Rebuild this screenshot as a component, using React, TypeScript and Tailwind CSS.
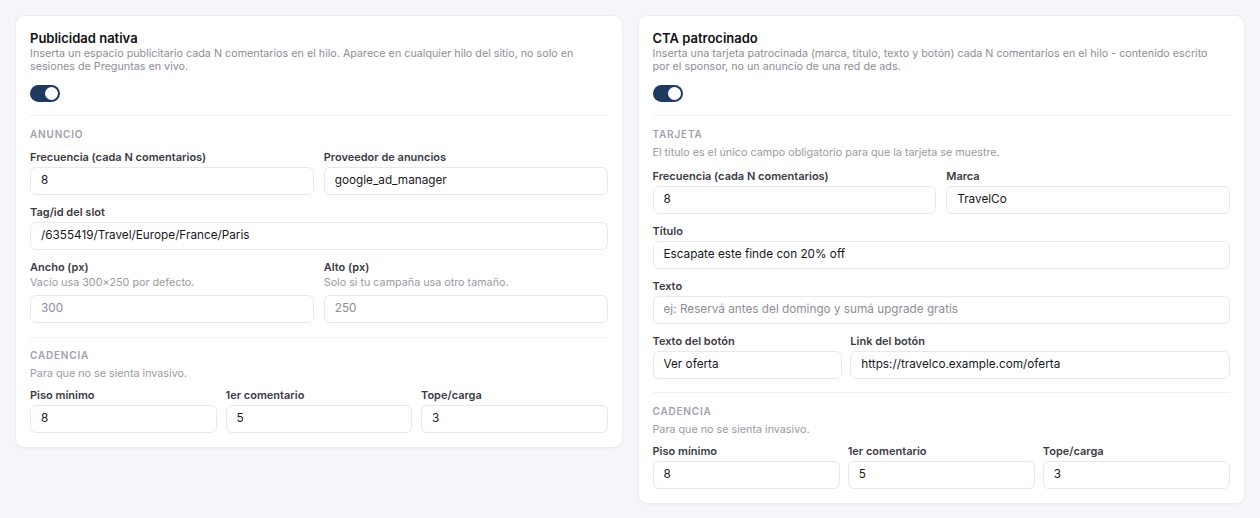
import React from "react";

const font = { fontFamily: "Inter, 'Noto Sans', sans-serif" };

function Toggle() {
  return (
    <div className="mt-3 flex h-[17px] w-[30px] items-center justify-end rounded-full bg-[#1f3a5f] p-[2px]">
      <div className="h-[13px] w-[13px] rounded-full bg-white" />
    </div>
  );
}

function Field({
  label,
  hint,
  value,
  placeholder,
}: {
  label: string;
  hint?: string;
  value?: string;
  placeholder?: string;
}) {
  return (
    <div className="flex min-w-0 flex-col">
      <div className="text-[11px] leading-[14px] font-semibold text-[#3b3b45]">{label}</div>
      {hint && <div className="mt-[2px] text-[10.75px] leading-[13px] text-[#9a9aa3]">{hint}</div>}
      <div
        className={`${hint ? "mt-[6px]" : "mt-[3px]"} flex h-[28px] items-center rounded-[6px] border border-[#e8e8ee] bg-white px-[10px] text-[11.75px] ${
          value ? "text-[#18181b]" : "text-[#8e8e96]"
        }`}
      >
        <span className="truncate">{value ?? placeholder}</span>
      </div>
    </div>
  );
}

function SectionHead({ title, hint }: { title: string; hint?: string }) {
  return (
    <>
      <div className="text-[10px] leading-[13px] font-semibold tracking-[0.08em] text-[#a1a1aa] uppercase">{title}</div>
      {hint && <div className="mt-[5px] text-[10.75px] leading-[13px] text-[#9a9aa3]">{hint}</div>}
    </>
  );
}

function Card({
  title,
  desc,
  children,
}: {
  title: string;
  desc: React.ReactNode;
  children: React.ReactNode;
}) {
  return (
    <div className="rounded-[9px] border border-[#ececf1] bg-white px-[14px] pt-[14px] pb-[14px] shadow-[0_1px_2px_rgba(0,0,0,0.03)]">
      <div className="text-[13px] leading-[17px] font-semibold text-[#111114]">{title}</div>
      <div className="pr-4 text-[10.75px] leading-[13px] text-[#8e8e96]">{desc}</div>
      <Toggle />
      <div className="mt-[13px] border-t border-[#f0f0f4]" />
      {children}
    </div>
  );
}

export default function App() {
  return (
    <div style={font} className="min-h-[518px] w-full bg-[#f5f5fa]">
      <div className="grid grid-cols-2 items-start gap-[15px] p-[15px]">
        <Card
          title="Publicidad nativa"
          desc="Inserta un espacio publicitario cada N comentarios en el hilo. Aparece en cualquier hilo del sitio, no solo en sesiones de Preguntas en vivo."
        >
          <div className="pt-3">
            <SectionHead title="Anuncio" />
            <div className="mt-[9px] grid grid-cols-2 gap-x-[10px] gap-y-[10px]">
              <Field label="Frecuencia (cada N comentarios)" value="8" />
              <Field label="Proveedor de anuncios" value="google_ad_manager" />
              <div className="col-span-2">
                <Field label="Tag/id del slot" value="/6355419/Travel/Europe/France/Paris" />
              </div>
              <Field label="Ancho (px)" hint="Vacío usa 300×250 por defecto." placeholder="300" />
              <Field label="Alto (px)" hint="Solo si tu campaña usa otro tamaño." placeholder="250" />
            </div>
          </div>
          <div className="mt-[14px] border-t border-[#f0f0f4]" />
          <div className="pt-[11px]">
            <SectionHead title="Cadencia" hint="Para que no se sienta invasivo." />
            <div className="mt-[8px] grid grid-cols-3 gap-x-[9px]">
              <Field label="Piso mínimo" value="8" />
              <Field label="1er comentario" value="5" />
              <Field label="Tope/carga" value="3" />
            </div>
          </div>
        </Card>

        <Card
          title="CTA patrocinado"
          desc="Inserta una tarjeta patrocinada (marca, título, texto y botón) cada N comentarios en el hilo - contenido escrito por el sponsor, no un anuncio de una red de ads."
        >
          <div className="pt-3">
            <SectionHead title="Tarjeta" hint="El título es el único campo obligatorio para que la tarjeta se muestre." />
            <div className="mt-[10px] grid grid-cols-2 gap-x-[10px] gap-y-[10px]">
              <Field label="Frecuencia (cada N comentarios)" value="8" />
              <Field label="Marca" value="TravelCo" />
              <div className="col-span-2">
                <Field label="Título" value="Escapate este finde con 20% off" />
              </div>
              <div className="col-span-2">
                <Field label="Texto" placeholder="ej: Reservá antes del domingo y sumá upgrade gratis" />
              </div>
              <div className="col-span-2 grid grid-cols-[1fr_2fr] gap-x-[8px]">
                <Field label="Texto del botón" value="Ver oferta" />
                <Field label="Link del botón" value="https://travelco.example.com/oferta" />
              </div>
            </div>
          </div>
          <div className="mt-[13px] border-t border-[#f0f0f4]" />
          <div className="pt-3">
            <SectionHead title="Cadencia" hint="Para que no se sienta invasivo." />
            <div className="mt-[8px] grid grid-cols-3 gap-x-[8px]">
              <Field label="Piso mínimo" value="8" />
              <Field label="1er comentario" value="5" />
              <Field label="Tope/carga" value="3" />
            </div>
          </div>
        </Card>
      </div>
    </div>
  );
}
